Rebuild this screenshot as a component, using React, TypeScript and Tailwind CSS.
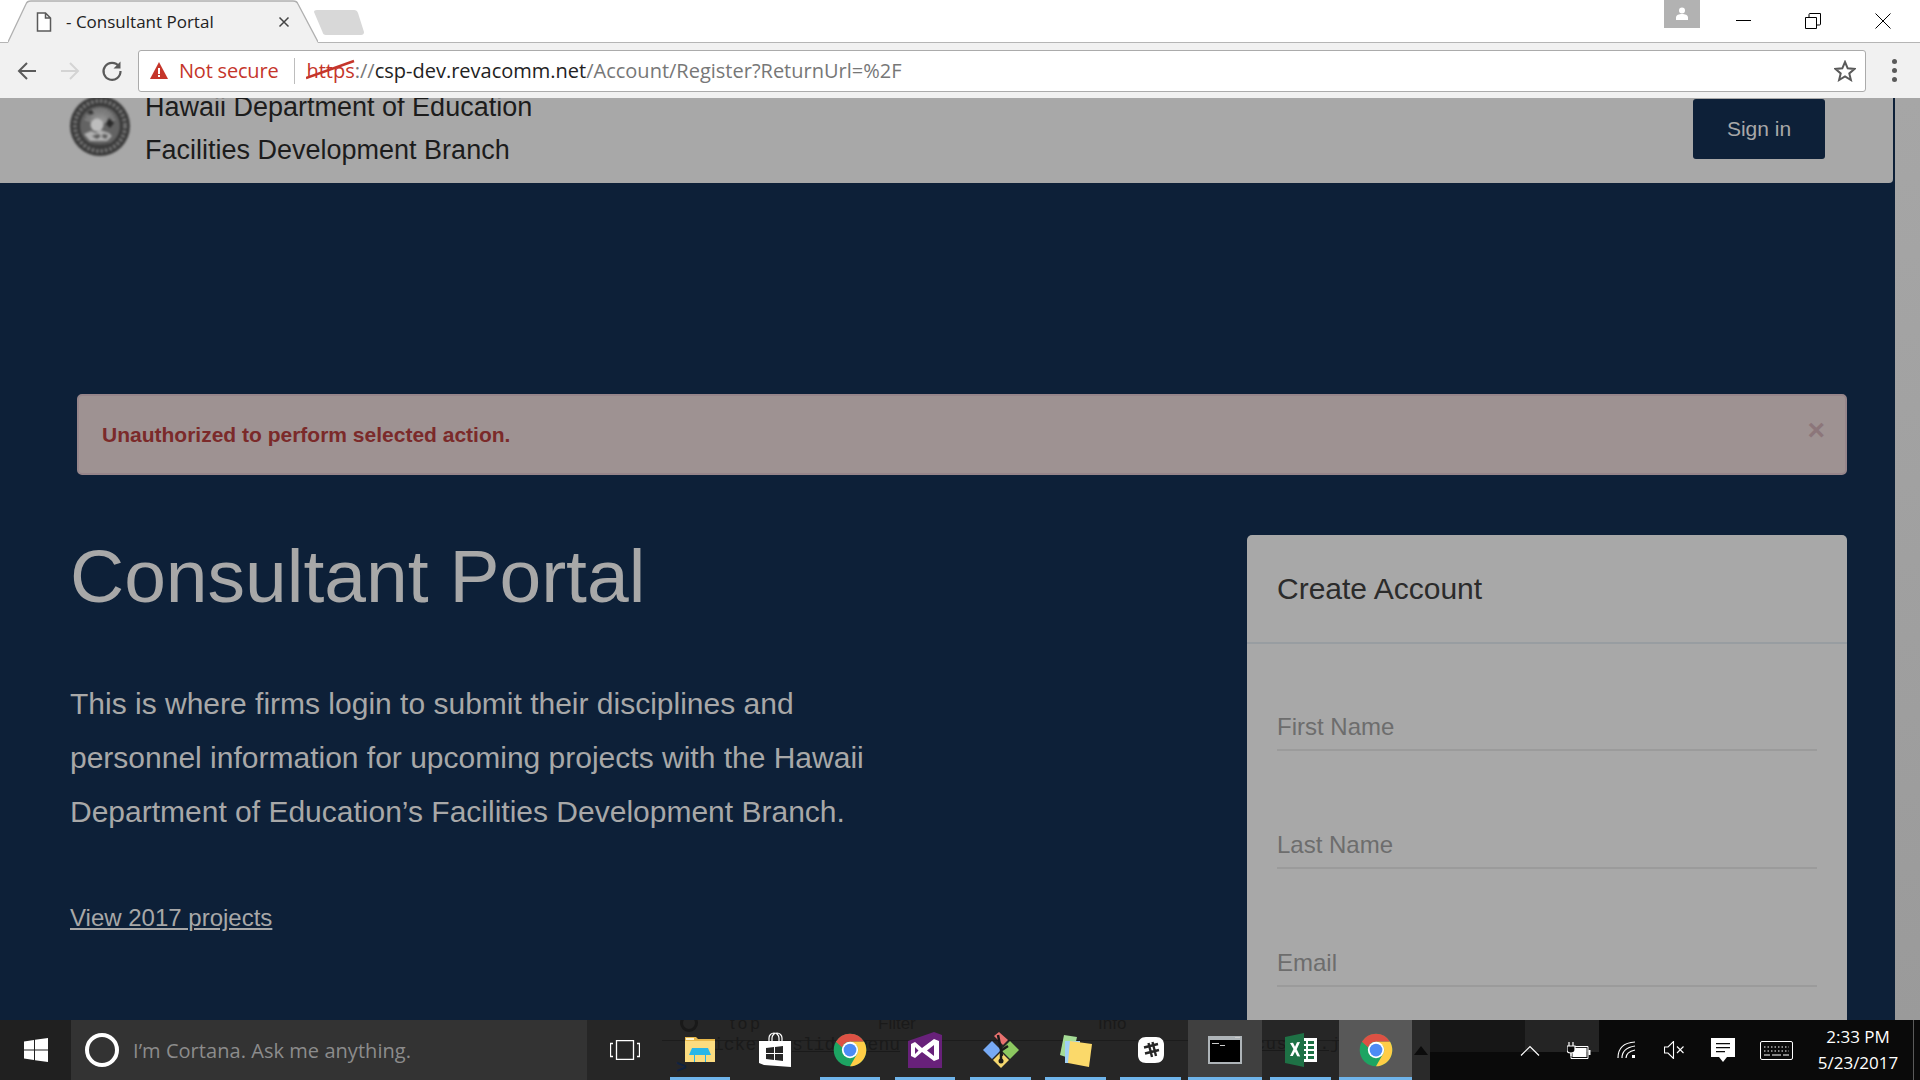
import type { ReactNode } from "react";

const UI_FONT = "font-['Open_Sans','Noto_Sans',sans-serif]";
const PAGE_FONT = "font-['Liberation_Sans',Arial,sans-serif]";

function ChromeLogo() {
  return (
    <svg width="34" height="34" viewBox="0 0 48 48">
      <circle cx="24" cy="24" r="23" fill="#1da462" />
      <path d="M24 1a23 23 0 0 1 19.9 11.5H24a11.5 11.5 0 0 0-11 8L4.1 12.5A23 23 0 0 1 24 1z" fill="#dd5144" />
      <path d="M43.9 12.5A23 23 0 0 1 24 47l9.9-17.2a11.5 11.5 0 0 0 0-11.5l-9.9-5.8z" fill="#ffcd46" />
      <circle cx="24" cy="24" r="11.5" fill="#fff" />
      <circle cx="24" cy="24" r="9" fill="#4c8bf5" />
    </svg>
  );
}

function ExplorerIcon() {
  return (
    <svg width="32" height="32" viewBox="0 0 32 32">
      <path d="M1 3h11l2 2h17v22H1z" fill="#e8b84a" />
      <path d="M1 7h30v21H1z" fill="#fbdc80" />
      <path d="M2 4h8v2H2z" fill="#fff6d0" />
      <path d="M5 21l3-7h16l3 7h-5v7H10v-7z" fill="#29b6e8" />
      <path d="M11 21h10v7H11z" fill="#fbdc80" />
    </svg>
  );
}

function StoreIcon() {
  return (
    <svg width="32" height="36" viewBox="0 0 32 36">
      <path d="M10 9V6a5 5 0 0 1 10 0v3M13 9V6a5 5 0 0 1 10 0v3" fill="none" stroke="#fff" strokeWidth="1.2" />
      <path d="M0 9h32v26L5 33 0 31z" fill="#fff" />
      <path d="M7 16l8-1v6H7zM16 15l8-1v7h-8zM7 22h8v6l-8-1zM16 22h8v7l-8-1z" fill="#262626" />
    </svg>
  );
}

function VisualStudioIcon() {
  return (
    <svg width="34" height="36" viewBox="0 0 34 36">
      <path d="M0 9L26 0l8 3v33H0z" fill="#68217a" />
      <path d="M3 12l4-2 7 6 12-9 5 2v18l-5 2-12-9-7 6-4-2zM7 15v7l3.5-3.5zM26 13l-7 5.500 7 5.500z" fill="#fff" fillRule="evenodd" />
    </svg>
  );
}

function GitIcon() {
  return (
    <svg width="36" height="36" viewBox="0 0 36 36">
      <path d="M11 4L16 0L25 8L20 13Z" fill="#e8716f" />
      <path d="M9 9L18 18L9 27L0 18Z" fill="#77aaf5" />
      <path d="M27 9L36 18L27 27L18 18Z" fill="#8cc860" />
      <path d="M18 20L26 28L18 36L10 28Z" fill="#f5d76e" />
      <path d="M15 3l3 15 1 6M19 18l6-4M18 18v10" stroke="#1a1a1a" strokeWidth="2.500" fill="none" />
      <circle cx="18" cy="29" r="2.500" fill="#1a1a1a" />
    </svg>
  );
}

function StickyIcon() {
  return (
    <svg width="34" height="34" viewBox="0 0 34 34">
      <path d="M5 2l13 2-5 22-12-4z" fill="#a5dc96" />
      <path d="M6 8h15v22H6z" fill="#9fd0f5" />
      <path d="M11 8l22 3-3 23-21-4z" fill="#fbd96a" />
    </svg>
  );
}

function SlackIcon() {
  return (
    <svg width="28" height="28" viewBox="0 0 28 28">
      <path d="M9 1h10c5 0 8 3 8 8v9c0 6-3 9-9 9H9c-5 0-8-3-8-8V9c0-5 3-8 8-8z" fill="#fff" />
      <path d="M11.500 7l3.500 14M15.500 6l3.500 14M7 11.500l14-3.500M8 17.500l14-3.500" stroke="#262626" strokeWidth="2.4" />
    </svg>
  );
}

function CmdIcon() {
  return (
    <svg width="34" height="28" viewBox="0 0 34 28">
      <path d="M0 0h34v28H0z" fill="#aeb4b8" />
      <path d="M2 4h30v22H2z" fill="#000" />
      <path d="M4 7h7v1H4zM12 9h5v1h-5zM27 1h5v1h-5z" fill="#ccc" />
    </svg>
  );
}

function ExcelIcon() {
  return (
    <svg width="32" height="34" viewBox="0 0 32 34">
      <path d="M14 5h18v24H14z" fill="#fff" />
      <path d="M17 8h4v3h-4zM23 8h6v3h-6zM17 13h4v3h-4zM23 13h6v3h-6zM17 18h4v3h-4zM23 18h6v3h-6zM17 23h4v3h-4zM23 23h6v3h-6z" fill="#1e7145" />
      <path d="M0 4l19-4v34L0 30z" fill="#1e7145" />
      <path d="M5 10l3-.3 2 4 2-4.500 3-.2-3.300 7.300 3.500 7.200-3-.2-2.200-4.500-2.200 4.300-2.800-.2 3.500-6.800z" fill="#fff" />
    </svg>
  );
}

function Seal() {
  const rays = Array.from({ length: 13 }, (_, i) => -72 + i * 12);
  return (
    <svg width="60" height="60" viewBox="0 0 60 60" className="shrink-0 blur-[0.8px]">
      <circle cx="30" cy="30" r="30" fill="#3a3a3a" />
      <circle cx="30" cy="30" r="25" fill="none" stroke="#767676" strokeWidth="4" strokeDasharray="2.500 2" />
      <circle cx="30" cy="30" r="20" fill="#636363" />
      {rays.map((a) => (
        <path key={a} d="M30 28V12" stroke="#969696" strokeWidth="1.300" transform={`rotate(${a} 30 28)`} />
      ))}
      <circle cx="27" cy="29" r="6.500" fill="#bdbdbd" />
      <path d="M14 38l7-3 5 2 4-3 9 3 3 3-5 5H20z" fill="#b0b0b0" />
      <path d="M22 40l6-2 3 2-4 3zM33 38l5 1-2 4-4-2z" fill="#5c5c5c" />
      <path d="M39 22l5 5-4 5-4-4z" fill="#2a2a2a" />
      <path d="M17 16l4-2 3 3-4 2z" fill="#333" />
      <path d="M20 46c6 3 14 3 20 0l-4 4H24z" fill="#444" />
    </svg>
  );
}

function TabStrip() {
  return (
    <div className="flex h-[43px] shrink-0 border-b border-[#b5b5b5] bg-white">
      <div className="relative ml-[8px] flex h-[43px] w-[310px] items-center pl-[28px]">
        <svg className="absolute inset-0" width="310" height="43" viewBox="0 0 310 43">
          <path d="M0 43 L18 4 Q19 1 23 1 H285 Q289 1 290 4 L310 43 Z" fill="#f1f1f1" />
          <path d="M0 42 L18 4 Q19 1 23 1 H285 Q289 1 290 4 L310 42" fill="none" stroke="#b0b0b0" strokeWidth="1.3" />
        </svg>
        <svg className="relative" width="16" height="20" viewBox="0 0 16 20">
          <path d="M1.500 1h8l5 5v13h-13z M9.500 1v5h5" fill="#fff" stroke="#5a5a5a" strokeWidth="1.500" />
        </svg>
        <span className={`relative ml-[14px] text-[17px] text-[#222] ${UI_FONT}`}>- Consultant Portal</span>
        <svg className="relative ml-[64px]" width="12" height="12" viewBox="0 0 12 12">
          <path d="M1.500 1.500l9 9M10.500 1.500l-9 9" stroke="#444" strokeWidth="1.500" />
        </svg>
      </div>
      <svg className="-ml-[4px] mt-[10px]" width="50" height="26" viewBox="0 0 50 26">
        <path d="M0 2Q0 0 3 0H40Q43 0 44 3L50 22Q50 25 47 25H12Q9 25 8.500 22Z" fill="#d8d8d8" />
      </svg>
      <div className="ml-auto flex h-[42px]">
        <div className="flex h-[28px] w-[36px] items-center justify-center bg-[#b2b2b2]">
          <svg width="14" height="14" viewBox="0 0 14 14">
            <circle cx="7" cy="3.500" r="3" fill="#fff" />
            <path d="M1 13v-2.500C1 8 4 7 7 7s6 1 6 3.500V13z" fill="#fff" />
          </svg>
        </div>
        <div className="flex w-[77px] items-start justify-center pt-[20px] pl-[9px]">
          <div className="h-px w-[15px] bg-black" />
        </div>
        <div className="flex w-[71px] items-start justify-center pt-[13px]">
          <svg width="16" height="16" viewBox="0 0 16 16" fill="none" stroke="#000">
            <path d="M.5 4.500h11v11H.5z" />
            <path d="M4 4.500V1.500Q4 .5 5 .5h10.500v10.500q0 1-1 1h-3" />
          </svg>
        </div>
        <div className="flex w-[72px] items-start justify-center pt-[13px] pr-[2px]">
          <svg width="16" height="16" viewBox="0 0 16 16">
            <path d="M.5.5l15 15M15.500.5l-15 15" stroke="#000" />
          </svg>
        </div>
      </div>
    </div>
  );
}

function Toolbar() {
  return (
    <div className="flex h-[55px] shrink-0 items-center bg-[#f1f1f1]">
      <div className="flex w-[138px] items-center pl-[17px]">
        <svg width="20" height="20" viewBox="0 0 20 20" fill="none" stroke="#5a5a5a" strokeWidth="2">
          <path d="M19 10H2M10 2l-8 8 8 8" />
        </svg>
        <svg className="ml-[23px]" width="20" height="20" viewBox="0 0 20 20" fill="none" stroke="#d4d4d4" strokeWidth="2">
          <path d="M1 10h17M10 2l8 8-8 8" />
        </svg>
        <svg className="ml-[21px]" width="22" height="22" viewBox="0 0 22 22" fill="none" stroke="#5a5a5a" strokeWidth="2.200">
          <path d="M18 6.500A8.500 8.500 0 1 0 19.500 11" />
          <path d="M19.500 1.500v7h-7" fill="#5a5a5a" stroke="none" />
        </svg>
      </div>
      <div className={`flex h-[42px] w-[1728px] items-center rounded-[3px] border border-[#ababab] bg-white pl-[11px] text-[20px] ${UI_FONT}`}>
        <svg width="18" height="17" viewBox="0 0 18 17">
          <path d="M9 0l9 17H0z" fill="#c5352a" />
          <path d="M8 6h2v6H8zM8 13h2v2H8z" fill="#fff" />
        </svg>
        <span className="ml-[11px] tracking-[-0.2px] text-[#c5352a]">Not secure</span>
        <div className="ml-[16px] h-[26px] w-px bg-[#bdbdbd]" />
        <div className="ml-[11px] whitespace-nowrap">
          <span className="relative text-[#c5352a]">
            https
            <svg className="absolute left-0 top-[2px]" width="50" height="22" viewBox="0 0 50 22">
              <path d="M0 19L48 2" stroke="#c5352a" strokeWidth="2.500" />
            </svg>
          </span>
          <span className="text-[#777]">://</span>
          <span className="text-[#222]">csp-dev.revacomm.net</span>
          <span className="text-[#777]">/Account/Register?ReturnUrl=%2F</span>
        </div>
        <svg className="ml-auto mr-[9px]" width="22" height="22" viewBox="0 0 22 22">
          <path d="M11 2l2.700 6.300 6.800.6-5.200 4.500 1.600 6.600L11 16.500 5.100 20l1.600-6.600L1.500 8.900l6.800-.6z" fill="none" stroke="#5a5a5a" strokeWidth="2" />
        </svg>
      </div>
      <div className="ml-[26px] flex flex-col gap-[4px]">
        <span className="h-[5px] w-[5px] rounded-full bg-[#5a5a5a]" />
        <span className="h-[5px] w-[5px] rounded-full bg-[#5a5a5a]" />
        <span className="h-[5px] w-[5px] rounded-full bg-[#5a5a5a]" />
      </div>
    </div>
  );
}

function Field({ placeholder, className }: { placeholder: string; className: string }) {
  return (
    <input
      placeholder={placeholder}
      className={`block h-[48px] w-full border-b-2 border-[#9b9b9b] bg-transparent pt-[2px] text-[24px] outline-none placeholder:text-[#6d6d6d] ${className}`}
    />
  );
}

function Page() {
  return (
    <div className={`flex min-h-0 flex-1 overflow-hidden ${PAGE_FONT}`}>
      <div className="flex h-full w-[1895px] flex-col bg-[#0d2038]">
        <header className="flex h-[85px] w-[1893px] shrink-0 items-start overflow-hidden rounded-br-[4px] bg-[#a8a8a8] pl-[70px] pr-[68px]">
          <div className="-mt-[2px]">
            <Seal />
          </div>
          <div className="-mt-[12px] ml-[15px] text-[27px] leading-[42.500px] text-[#1c1c1c]">
            <div>Hawaii Department of Education</div>
            <div>Facilities Development Branch</div>
          </div>
          <button className="ml-auto mt-[1px] h-[60px] w-[132px] rounded-[3px] bg-[#0d2038] text-[21px] text-[#a8a8a8]">
            Sign in
          </button>
        </header>

        <div className="flex flex-col pl-[70px] pr-[48px]">
          <div className="ml-[7px] mt-[211px] flex h-[81px] items-center justify-between rounded-[5px] border-2 border-[#96858a] bg-[#9e9292] pl-[23px] pr-[20px]">
            <span className="text-[21px] font-bold text-[#7b2a2a]">Unauthorized to perform selected action.</span>
            <span className="-mt-[10px] text-[30px] font-bold leading-none text-[#8c767a]">×</span>
          </div>

          <div className="mt-[60px] flex items-start justify-between">
            <div className="w-[830px] text-[#a8a8a8]">
              <h1 className="-mt-[1px] text-[75px] leading-[84px]">Consultant Portal</h1>
              <p className="mt-[59px] text-[30px] leading-[54px]">
                This is where firms login to submit their disciplines and personnel information for upcoming projects
                with the Hawaii Department of Education’s Facilities Development Branch.
              </p>
              <a href="#" className="mt-[61px] block text-[24px] underline">
                View 2017 projects
              </a>
            </div>

            <div className="w-[600px] shrink-0 rounded-t-[5px] bg-[#a8a8a8] pb-[200px]">
              <div className="flex h-[109px] items-center border-b-2 border-[#989da1] pl-[30px] text-[30px] text-[#2b2b2b]">
                Create Account
              </div>
              <div className="px-[30px]">
                <Field placeholder="First Name" className="mt-[59px]" />
                <Field placeholder="Last Name" className="mt-[70px]" />
                <Field placeholder="Email" className="mt-[70px]" />
              </div>
            </div>
          </div>
        </div>
      </div>
      <div className="flex-1 bg-gradient-to-b from-[#a6a6a6] to-[#9a9a9a]" />
    </div>
  );
}

const apps: { key: string; cls: string; icon: ReactNode; line?: boolean }[] = [
  { key: "explorer", cls: "ml-[8px] w-[60px]", icon: <ExplorerIcon />, line: true },
  { key: "store", cls: "ml-[15px] w-[60px]", icon: <StoreIcon /> },
  { key: "chrome", cls: "ml-[15px] w-[60px]", icon: <ChromeLogo />, line: true },
  { key: "vs", cls: "ml-[15px] w-[60px]", icon: <VisualStudioIcon />, line: true },
  { key: "git", cls: "ml-[15px] w-[61px]", icon: <GitIcon />, line: true },
  { key: "sticky", cls: "ml-[14px] w-[61px]", icon: <StickyIcon />, line: true },
  { key: "slack", cls: "ml-[14px] w-[61px]", icon: <SlackIcon />, line: true },
  { key: "cmd", cls: "ml-[7px] w-[74px] bg-[#404040]", icon: <CmdIcon />, line: true },
  { key: "excel", cls: "ml-[8px] w-[61px]", icon: <ExcelIcon />, line: true },
  { key: "chrome2", cls: "ml-[8px] w-[73px] bg-[#585858]", icon: <ChromeLogo />, line: true },
];

function TaskbarGhost() {
  // devtools window showing through the translucent taskbar
  return (
    <div className="absolute inset-0 overflow-hidden font-['Liberation_Mono',monospace] text-[18px] leading-none text-[#1a1a1a]">
      <div className="absolute left-0 right-0 top-[20px] h-px bg-[#1c1c1c]" />
      <div className="absolute left-[18px] top-[-6px] h-[18px] w-[18px] rounded-full border-[3px] border-[#191919]" />
      <span className="absolute left-[68px] top-[-5px] font-['Liberation_Sans',sans-serif] text-[17px] tracking-[3px]">top</span>
      <span className="absolute left-[216px] top-[-5px] font-['Liberation_Sans',sans-serif] text-[17px]">Filter</span>
      <span className="absolute left-[436px] top-[-5px] font-['Liberation_Sans',sans-serif] text-[17px]">Info</span>
      <span className="absolute left-[51px] top-[16px]">icke</span>
      <span className="absolute left-[130px] top-[16px] underline">slide_menu</span>
      <span className="absolute left-[593px] top-[16px] text-[17px] tracking-[0.5px] underline">custom.js:6</span>
      <span className="absolute left-[14px] top-[39px] font-bold text-[#0f2240]">&gt;</span>
      <svg className="absolute left-[752px] top-[33px]" width="14" height="9" viewBox="0 0 14 9">
        <path d="M7 0l7 9H0z" fill="#111" />
      </svg>
    </div>
  );
}

function Taskbar() {
  return (
    <div className="flex h-[60px] shrink-0 bg-[#262626]">
      <div className="flex w-[71px] items-center justify-center bg-[#202020]">
        <svg width="24" height="24" viewBox="0 0 24 24" fill="#fff">
          <path d="M0 3.500l10-1.500v9.500H0zM11 1.800L24 0v11.500H11zM0 12.500h10V22L0 20.500zM11 12.500h13V24l-13-1.800z" />
        </svg>
      </div>
      <div className={`flex w-[516px] items-center bg-[#333333] pl-[14px] text-[20px] text-[#8c8c8c] ${UI_FONT}`}>
        <div className="h-[34px] w-[34px] rounded-full border-[4px] border-white" />
        <span className="ml-[14px] mt-[2px] tracking-[0.05px]">I’m Cortana. Ask me anything.</span>
      </div>
      <div className="flex w-[75px] items-center justify-center">
        <svg width="30" height="20" viewBox="0 0 30 20" fill="none" stroke="#fff" strokeWidth="1.300">
          <path d="M6.500.5h17v19h-17zM3 3.500H.5v13H3M27 3.500h2.500v13H27" />
        </svg>
      </div>
      <div className="relative flex w-[750px] items-stretch">
        <TaskbarGhost />
        {apps.map((a) => (
          <div key={a.key} className={`relative flex items-center justify-center ${a.cls}`}>
            {a.icon}
            {a.line && <div className="absolute bottom-0 left-0 right-0 h-[3px] bg-[#6fb4ea]" />}
          </div>
        ))}
      </div>
      <div className="flex w-[18px] items-center justify-center bg-[#2a2a2a]">
        <svg width="14" height="9" viewBox="0 0 14 9">
          <path d="M7 0l7 9H0z" fill="#0c0c0c" />
        </svg>
      </div>
      <div className={`relative flex flex-1 items-center bg-[#0a0a0a] pl-[75px] ${UI_FONT}`}>
        <div className="absolute left-0 top-0 h-[32px] w-[95px] bg-[#161616]" />
        <div className="absolute left-[95px] top-0 h-[32px] w-[74px] bg-[#242424]" />
        <div className="relative flex w-[49px] justify-center">
          <svg width="20" height="11" viewBox="0 0 20 11" fill="none" stroke="#fff" strokeWidth="1.200">
            <path d="M1 10.500l9-9 9 9" />
          </svg>
        </div>
        <div className="relative flex w-[49px] justify-center">
          <svg width="24" height="17" viewBox="0 0 24 17">
            <path d="M4 4.500h17v12H4z" fill="none" stroke="#fff" />
            <path d="M5.500 6h14v9h-14zM21.500 8h2v5h-2z" fill="#fff" />
            <path d="M2 4V0M6 4V0M0 4h8v4Q8 11 4 11T0 8zM4 11v3" fill="#0a0a0a" stroke="#fff" strokeWidth="1.200" />
          </svg>
        </div>
        <div className="relative flex w-[47px] justify-center">
          <svg width="20" height="18" viewBox="0 0 20 18" fill="none" stroke="#fff" strokeWidth="1.200">
            <path d="M1 17Q1 2 18 1M5 17Q5 7 18 5M9 17Q9 11 18 9" />
            <rect x="15" y="14" width="3" height="3" fill="#fff" stroke="none" />
          </svg>
        </div>
        <div className="relative flex w-[47px] justify-center">
          <svg width="20" height="18" viewBox="0 0 20 18" fill="none" stroke="#fff" strokeWidth="1.100">
            <path d="M.5 6h3.500L9.500.5v17L4 12H.5zM13 5.500l6.500 6.500M19.500 5.500L13 12" />
          </svg>
        </div>
        <div className="relative flex w-[52px] justify-center">
          <svg width="24" height="24" viewBox="0 0 24 24">
            <path d="M0 0h24v19h-8l-4 5-4-5H0z" fill="#fff" />
            <path d="M5 5h14v1.300H5zM5 9h14v1.300H5zM5 13h9v1.300H5z" fill="#0a0a0a" />
          </svg>
        </div>
        <div className="relative flex w-[54px] justify-center">
          <svg width="33" height="19" viewBox="0 0 33 19" fill="none" stroke="#fff">
            <rect x=".5" y=".5" width="32" height="18" rx="1.500" />
            <path d="M4 6h25M4 10h25" strokeDasharray="1.500 2" />
            <path d="M4 14h6M12 14h9M23 14h6" />
          </svg>
        </div>
        <div className="relative flex w-[110px] flex-col items-center text-[17px] leading-[26px] text-white">
          <div>2:33 PM</div>
          <div>5/23/2017</div>
        </div>
        <div className="relative h-full w-px self-stretch bg-[#5a5a5a]" />
      </div>
    </div>
  );
}

export default function App() {
  return (
    <div className="flex h-screen w-screen flex-col overflow-hidden">
      <TabStrip />
      <Toolbar />
      <Page />
      <Taskbar />
    </div>
  );
}
